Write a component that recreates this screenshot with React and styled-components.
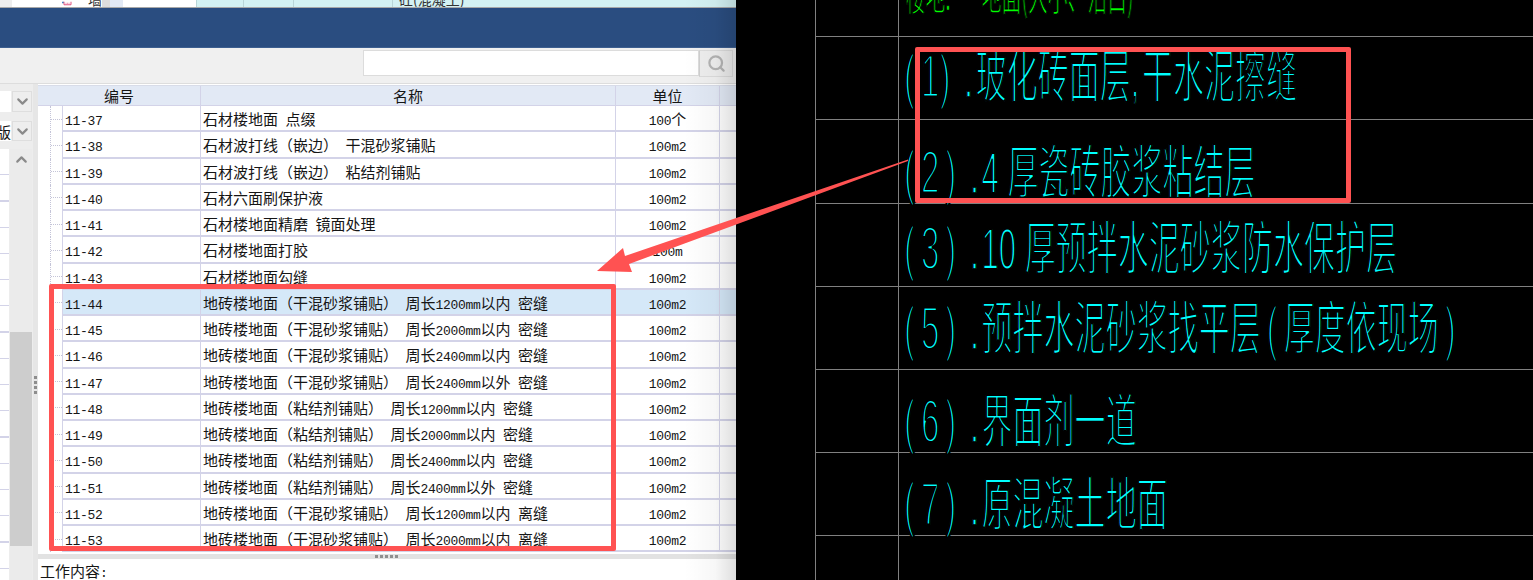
import React from 'react';
import styled, { createGlobalStyle } from 'styled-components';
import { ChevronDown, ChevronUp, Search } from 'lucide-react';

const GlobalStyle = createGlobalStyle`
  html, body {
    margin: 0;
    background: #000;
  }
  * {
    box-sizing: border-box;
  }
`;

const cjk = `"Noto Sans CJK SC", "Liberation Sans", sans-serif`;
const lineColor = '#d3d3e8';

const rows = [
  ['11-37', '石材楼地面 点缀', '100个'],
  ['11-38', '石材波打线（嵌边） 干混砂浆铺贴', '100m2'],
  ['11-39', '石材波打线（嵌边） 粘结剂铺贴', '100m2'],
  ['11-40', '石材六面刷保护液', '100m2'],
  ['11-41', '石材楼地面精磨 镜面处理', '100m2'],
  ['11-42', '石材楼地面打胶', '100m'],
  ['11-43', '石材楼地面勾缝', '100m2'],
  ['11-44', '地砖楼地面（干混砂浆铺贴） 周长1200mm以内 密缝', '100m2'],
  ['11-45', '地砖楼地面（干混砂浆铺贴） 周长2000mm以内 密缝', '100m2'],
  ['11-46', '地砖楼地面（干混砂浆铺贴） 周长2400mm以内 密缝', '100m2'],
  ['11-47', '地砖楼地面（干混砂浆铺贴） 周长2400mm以外 密缝', '100m2'],
  ['11-48', '地砖楼地面（粘结剂铺贴） 周长1200mm以内 密缝', '100m2'],
  ['11-49', '地砖楼地面（粘结剂铺贴） 周长2000mm以内 密缝', '100m2'],
  ['11-50', '地砖楼地面（粘结剂铺贴） 周长2400mm以内 密缝', '100m2'],
  ['11-51', '地砖楼地面（粘结剂铺贴） 周长2400mm以外 密缝', '100m2'],
  ['11-52', '地砖楼地面（干混砂浆铺贴） 周长1200mm以内 离缝', '100m2'],
  ['11-53', '地砖楼地面（干混砂浆铺贴） 周长2000mm以内 离缝', '100m2']
];

const notes = [
  { n: '1', text: '玻化砖面层,\u200a干水泥擦缝', top: 9, tight: true },
  { n: '2', text: '4 厚瓷砖胶浆粘结层', top: 22 },
  { n: '3', text: '10 厚预拌水泥砂浆防水保护层', top: 14 },
  { n: '5', text: '预拌水泥砂浆找平层(厚度依现场)', top: 11 },
  { n: '6', text: '界面剂一道', top: 21 },
  { n: '7', text: '原混凝土地面', top: 21 }
];

// half-width runs need their own font, the CJK face has no 7.5px digits
const mixed = text =>
  text.split(/([\x20-\x7e]+)/).map((part, i) =>
    /^[\x20-\x7e]+$/.test(part) ? <Latin key={i}>{part}</Latin> : part
  );

const withParens = text =>
  text.split(/([()])/).map((part, i) =>
    part === '(' || part === ')' ? <NoteParen key={i}>{part}</NoteParen> : part
  );

const App = () => (
  <Page>
    <GlobalStyle />
    <Software>
      <TopStrip>
        <StripCell $w={12} $bg="#eeeeee" />
        <StripCell $w={50} $bg="#ffffff" />
        <StripCell $w={40} $bg="#ffffff">
          <svg width="40" height="7" viewBox="0 0 40 7">
            <path d="M0 0h4v3H0z" fill="#3f86c8" />
            <path d="M4 0v6h14V0" fill="#fff" stroke="#e0527e" strokeWidth="2" />
            <path d="M8 2v2M11 2v2M14 2v2" stroke="#e0527e" strokeWidth="1.4" />
          </svg>
          <StripText>墙</StripText>
        </StripCell>
        <StripCell $w={8} $bg="#dddddd" />
        <StripCell $w={13} $bg="#e2e9f5" />
        <StripCell $w={73} $bg="#ffffff" />
        <StripCell $w={47} $bg="#d4f2f3" $divider />
        <StripCell $w={50} $bg="#d4f2f3" $divider />
        <StripCell $w={99} $bg="#d4f2f3" $divider />
        <StripCell $w={344} $bg="#d4f2f3" $divider>
          <StripText>砼(混凝土)</StripText>
        </StripCell>
      </TopStrip>
      <TitleBar />
      <Toolbar>
        <SearchInput />
        <SearchButton>
          <Search size={19} strokeWidth={2.8} color="#b4b4b4" />
        </SearchButton>
      </Toolbar>
      <Body>
        <Sidebar>
          <SelectRow>
            <SelectValue />
            <SelectButton>
              <ChevronDown size={17} strokeWidth={3} color="#8a8a8a" />
            </SelectButton>
          </SelectRow>
          <SelectRow>
            <SelectValue>版</SelectValue>
            <SelectButton>
              <ChevronDown size={17} strokeWidth={3} color="#8a8a8a" />
            </SelectButton>
          </SelectRow>
          <SideList>
            <SideLines />
            <Scrollbar>
              <ScrollUp>
                <ChevronUp size={17} strokeWidth={3} color="#8a8a8a" />
              </ScrollUp>
              <ScrollThumb />
            </Scrollbar>
          </SideList>
        </Sidebar>
        <Gutter>
          <Grip />
        </Gutter>
        <Main>
          <HeaderRow>
            <HeaderCell>编号</HeaderCell>
            <HeaderCell>名称</HeaderCell>
            <HeaderCell>单位</HeaderCell>
            <HeaderCell />
          </HeaderRow>
          <Rows>
            {rows.map(([code, name, unit]) => (
              <Row key={code}>
                <TreeCell />
                <Cell $selected={code === '11-44'}>{mixed(code)}</Cell>
                <Cell $selected={code === '11-44'}>{mixed(name)}</Cell>
                <Cell $selected={code === '11-44'} $center>{mixed(unit)}</Cell>
                <Cell $selected={code === '11-44'} />
              </Row>
            ))}
          </Rows>
          <SplitBar>
            <SplitDots />
          </SplitBar>
          <Detail>工作内容<Latin>:</Latin></Detail>
        </Main>
      </Body>
      <EdgeShadow />
    </Software>

    <Drawing>
      <DrawingRow $h={37}>
        <LabelCell />
        <TextCell>
          <LayerName>楼地:       地面(大小、沿白)</LayerName>
        </TextCell>
      </DrawingRow>
      {notes.map(note => (
        <DrawingRow key={note.n} $h={83}>
          <LabelCell />
          <TextCell>
            <NoteLine $top={note.top}>
              <Marker>
                (<Digit $tight={note.tight}>{note.n}</Digit>)
              </Marker>
              <Dot>.</Dot>
              {withParens(note.text)}
            </NoteLine>
          </TextCell>
        </DrawingRow>
      ))}
      <DrawingRow $grow>
        <LabelCell />
        <TextCell />
      </DrawingRow>
    </Drawing>

    <ListHighlight />
    <NoteHighlight />
    <Arrow width="330" height="130" viewBox="590 150 330 130">
      <path
        d="M597 271 L623 248 L625 256 L908 159.5 L908 161 L629 264 L632 272 Z"
        fill="#ff5252"
      />
    </Arrow>
  </Page>
);

const Page = styled.div`
  position: relative;
  display: flex;
  width: 1533px;
  height: 580px;
  overflow: hidden;
  background: #000;
`;

const Software = styled.div`
  position: relative;
  display: flex;
  flex-direction: column;
  flex: 0 0 736px;
  height: 580px;
  background: #f0f0f0;
  font-family: ${cjk};
  font-size: 15px;
  color: #151515;
`;

const EdgeShadow = styled.div`
  position: absolute;
  top: 0;
  right: 0;
  bottom: 0;
  width: 52px;
  background: linear-gradient(to right, rgba(0, 0, 0, 0), rgba(0, 0, 0, 0.03) 60%, rgba(0, 0, 0, 0.13));
  pointer-events: none;
`;

const Latin = styled.span`
  font-family: 'Liberation Mono', monospace;
  font-size: 13px;
  letter-spacing: -0.3px;
  white-space: pre;
`;

const TopStrip = styled.div`
  display: flex;
  flex: 0 0 8px;
  overflow: hidden;
  border-bottom: 1px solid #a8a8a8;
`;

const StripCell = styled.div`
  display: flex;
  align-items: flex-end;
  flex: 0 0 ${props => props.$w}px;
  height: 7px;
  overflow: hidden;
  background: ${props => props.$bg};
  border-left: ${props => (props.$divider ? '1px solid #b9d6d8' : 'none')};
`;

const StripText = styled.span`
  padding-left: 6px;
  font-size: 14px;
  line-height: 15px;
  white-space: nowrap;
  color: #333;
`;

const TitleBar = styled.div`
  flex: 0 0 40px;
  background: #2a4d80;
  border-bottom: 1px solid #3d5f90;
`;

const Toolbar = styled.div`
  display: flex;
  justify-content: flex-end;
  align-items: flex-start;
  flex: 0 0 35px;
  padding: 2px 3px 0 0;
  background: #f0f0f0;
`;

const SearchInput = styled.div`
  width: 336px;
  height: 26px;
  background: #fff;
  border: 1px solid #dcdcdc;
`;

const SearchButton = styled.div`
  display: flex;
  align-items: center;
  justify-content: center;
  width: 34px;
  height: 27px;
  background: #eeeeee;
  border: 1px solid #dcdcdc;
  border-left: 1px solid #cfcfcf;
`;

const Body = styled.div`
  display: flex;
  flex: 1;
  min-height: 0;
  border-top: 1px solid #dddddd;
`;

const Sidebar = styled.div`
  display: flex;
  flex-direction: column;
  flex: 0 0 33px;
  padding-top: 7px;
  background: #ededed;
`;

const SelectRow = styled.div`
  display: flex;
  gap: 1px;
  height: 21px;
  margin-bottom: 9px;

  & + & {
    height: 20px;
    margin-bottom: 8px;
  }
`;

const SelectValue = styled.div`
  display: flex;
  justify-content: flex-end;
  align-items: center;
  flex: 0 0 11px;
  overflow: hidden;
  background: #fff;
  font-size: 15px;
  white-space: nowrap;
`;

const SelectButton = styled.div`
  display: flex;
  align-items: center;
  justify-content: center;
  flex: 1;
  margin-right: 1px;
  background: #eeeeee;
  border: 1px solid #dedede;
`;

const SideList = styled.div`
  display: flex;
  flex: 1;
  min-height: 0;
`;

const SideLines = styled.div`
  flex: 0 0 9px;
  background: repeating-linear-gradient(
    to bottom,
    #fff 0,
    #fff 25px,
    ${lineColor} 25px,
    ${lineColor} 26.25px
  );
`;

const Scrollbar = styled.div`
  display: flex;
  flex-direction: column;
  flex: 1;
  margin-left: 1px;
  margin-right: 1px;
  background: #ebebeb;
`;

const ScrollUp = styled.div`
  display: flex;
  justify-content: center;
  padding-top: 2px;
  height: 183px;
`;

const ScrollThumb = styled.div`
  height: 214px;
  background: #cdcdcd;
`;

const Gutter = styled.div`
  flex: 0 0 5px;
  padding: 292px 1px 0 1px;
  background: #e6e6e6;
`;

const Grip = styled.div`
  width: 3px;
  height: 20px;
  background: repeating-linear-gradient(to bottom, #8d8d8d 0, #8d8d8d 3px, transparent 3px, transparent 5px);
`;

const Main = styled.div`
  display: flex;
  flex-direction: column;
  flex: 1;
  min-width: 0;
  padding-top: 1px;
  background: #fff;
`;

const HeaderRow = styled.div`
  display: grid;
  grid-template-columns: 163px 415px 104px 1fr;
  flex: 0 0 21px;
  background: #e2e9f5;
  border-top: 1px solid #d8dce8;
  border-bottom: 1px solid ${lineColor};
`;

const HeaderCell = styled.div`
  display: flex;
  align-items: center;
  justify-content: center;
  border-right: 1px solid ${lineColor};
  font-size: 15px;
  line-height: 19px;

  &:last-child {
    border-right: none;
  }
`;

const Rows = styled.div`
  flex: 0 0 448px;
  overflow: hidden;
`;

const Row = styled.div`
  display: grid;
  grid-template-columns: 24px 139px 415px 104px 1fr;
  height: 26.25px;
`;

const TreeCell = styled.div`
  display: flex;
  align-items: center;
  margin-left: 12px;
  border-left: 1px dotted #c4c4d8;

  &::after {
    content: '';
    flex: 1;
    border-top: 1px dotted #c4c4d8;
  }
`;

const Cell = styled.div`
  padding-left: ${props => (props.$center ? '0' : '2px')};
  overflow: hidden;
  background: ${props => (props.$selected ? '#d5e8f8' : '#fff')};
  border-bottom: 2px solid ${lineColor};
  border-right: 1px solid ${lineColor};
  line-height: 25px;
  text-align: ${props => (props.$center ? 'center' : 'left')};
  white-space: pre;

  &:nth-child(2) {
    border-left: 1px solid ${lineColor};
  }
  &:last-child {
    border-right: none;
  }
`;

const SplitBar = styled.div`
  display: flex;
  align-items: center;
  justify-content: center;
  flex: 0 0 5px;
  background: #e2e2e2;
`;

const SplitDots = styled.div`
  width: 24px;
  height: 3px;
  background: repeating-linear-gradient(to right, #8f8f8f 0, #8f8f8f 3px, transparent 3px, transparent 5px);
`;

const Detail = styled.div`
  flex: 1;
  padding: 2px 0 0 2px;
  background: #fff;
  font-size: 15px;
  line-height: 20px;
`;

const Drawing = styled.div`
  display: flex;
  flex-direction: column;
  flex: 1;
  padding-left: 79px;
  background: #000;
`;

const DrawingRow = styled.div`
  display: flex;
  flex: ${props => (props.$grow ? '1' : `0 0 ${props.$h}px`)};
  border-bottom: ${props => (props.$grow ? 'none' : '1px solid #808080')};
`;

const LabelCell = styled.div`
  flex: 0 0 84px;
  border-left: 1px solid #808080;
  border-right: 1px solid #808080;
`;

const TextCell = styled.div`
  flex: 1;
  min-width: 0;
  padding-left: 5px;
`;

// the CAD font is tall, narrow and hairline: squeeze it and eat the stems with a black stroke
const NoteLine = styled.div`
  padding-top: ${props => props.$top}px;
  font-family: 'Liberation Sans', 'Noto Sans CJK SC', sans-serif;
  font-size: 58px;
  line-height: 60px;
  white-space: pre;
  color: #00ffff;
  -webkit-text-stroke: 2.2px #000;
  transform: scaleX(0.535);
  transform-origin: left top;
`;

const Marker = styled.span`
  font-size: 62px;
  letter-spacing: 11px;
  -webkit-text-stroke: 3px #000;
`;

const Digit = styled.span`
  letter-spacing: ${props => (props.$tight ? '0' : '11px')};
`;

const Dot = styled.span`
  margin: 0 5px 0 15px;
  -webkit-text-stroke: 1.6px #000;
`;

const NoteParen = styled.span`
  margin: 0 11px;
  font-size: 62px;
  -webkit-text-stroke: 3px #000;
`;

const LayerName = styled.div`
  margin-top: -40px;
  padding-left: 4px;
  font-family: 'Noto Sans CJK SC', sans-serif;
  font-size: 46px;
  line-height: 60px;
  white-space: pre;
  color: #00ff00;
  -webkit-text-stroke: 1.6px #000;
  transform: scaleX(0.43);
  transform-origin: left top;
`;

const ListHighlight = styled.div`
  position: absolute;
  left: 49px;
  top: 284px;
  width: 567px;
  height: 267px;
  border: 5px solid #ff5252;
  border-radius: 2px;
  pointer-events: none;
`;

const NoteHighlight = styled.div`
  position: absolute;
  left: 915px;
  top: 47px;
  width: 436px;
  height: 156px;
  border: 5px solid #ff5252;
  border-radius: 2px;
  pointer-events: none;
`;

const Arrow = styled.svg`
  position: absolute;
  left: 590px;
  top: 150px;
  pointer-events: none;
`;

export default App;
